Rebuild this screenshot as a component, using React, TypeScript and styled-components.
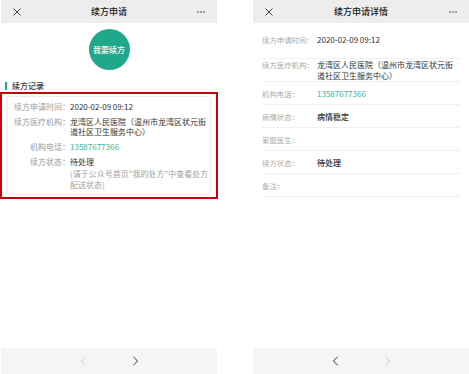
import React from 'react';
import styled, { createGlobalStyle } from 'styled-components';

const GlobalStyle = createGlobalStyle`
  html, body {
    margin: 0;
    padding: 0;
    background: #ffffff;
  }
  body {
    font-family: "Noto Sans CJK SC", "Noto Sans", sans-serif;
    -webkit-font-smoothing: antialiased;
  }
`;

// Layout
const Page = styled.div`
  width: 469px;
  height: 374px;
  padding-left: 1px;
  box-sizing: border-box;
  display: flex;
  gap: 36px;
  overflow: hidden;
`;

const Phone = styled.div`
  width: 216px;
  height: 374px;
  display: flex;
  flex-direction: column;
  background: #fff;
`;

const Header = styled.header`
  height: 23px;
  flex-shrink: 0;
  background: #ededed;
  display: grid;
  grid-template-columns: 1fr auto 1fr;
  align-items: center;
  padding: 0 12px;
`;

const HeaderTitle = styled.h1`
  margin: 0;
  font-size: 9px;
  line-height: 11px;
  font-weight: 500;
  color: #1a1a1a;
`;

const CloseIcon = styled.svg`
  width: 8px;
  height: 8px;
  justify-self: start;
`;

const MoreIcon = styled.svg`
  width: 8px;
  height: 2px;
  justify-self: end;
`;

const Body = styled.main`
  flex: 1;
  display: flex;
  flex-direction: column;
`;

const Footer = styled.footer`
  height: 26px;
  flex-shrink: 0;
  background: #f5f5f5;
  display: flex;
  align-items: center;
  justify-content: center;
  gap: 45px;
`;

const Chevron = styled.svg<{ $active?: boolean }>`
  width: 7px;
  height: 10px;
  color: ${p => (p.$active ? '#333333' : '#c9c9c9')};
`;

// Left screen
const RenewButton = styled.button`
  align-self: center;
  margin-top: 6px;
  width: 41px;
  height: 41px;
  border: none;
  border-radius: 50%;
  background: #21a78c;
  color: #fff;
  font-family: inherit;
  font-size: 8px;
  font-weight: 500;
  padding: 0;
`;

const SectionTitle = styled.div`
  margin-top: 11px;
  height: 10px;
  display: flex;
  align-items: center;
  gap: 5px;
  padding-left: 4px;
  font-size: 8px;
  line-height: 10px;
  font-weight: 500;
  color: #333;

  &::before {
    content: '';
    width: 2px;
    height: 8px;
    background: #21a78c;
  }
`;

const RecordFrame = styled.div`
  margin: 1px -1px 0 -1px;
  border: 2px solid #c4000b;
  padding: 2px 5px;
`;

const RecordCard = styled.div`
  border: 1px solid #ececec;
  border-radius: 3px;
  box-shadow: 0 0 3px rgba(0, 0, 0, 0.05);
  padding: 5px 0 4px 6px;
  display: flex;
  flex-direction: column;
  gap: 5px;
`;

const CardRow = styled.div`
  display: grid;
  grid-template-columns: 56px 140px;
  font-size: 8px;
  line-height: 10px;
`;

const CardLabel = styled.span`
  text-align: right;
  color: #9b9b9b;
  white-space: nowrap;
`;

const CardValue = styled.span<{ $accent?: boolean }>`
  color: ${p => (p.$accent ? '#3cb49b' : '#333333')};
`;

const Note = styled.div`
  margin-top: 1px;
  line-height: 11px;
  color: #a3a3a3;
`;

// Right screen
const DetailList = styled.div`
  display: flex;
  flex-direction: column;
  margin: 0 9px;
`;

const DetailRow = styled.div<{ $first?: boolean; $multi?: boolean }>`
  min-height: ${p => (p.$first ? 36 : 23)}px;
  box-sizing: border-box;
  padding-top: ${p => (p.$first ? 11 : 0)}px;
  display: grid;
  grid-template-columns: 55px 1fr;
  align-items: ${p => (p.$first || p.$multi ? 'start' : 'center')};
  border-bottom: 1px solid #f0f0f0;
  font-size: 8px;
  line-height: 11px;
`;

const DetailLabel = styled.span`
  font-size: 7.4px;
  color: #ababab;
  white-space: nowrap;
`;

const DetailValue = styled.span<{ $accent?: boolean; $strong?: boolean }>`
  color: ${p => (p.$accent ? '#3cb49b' : '#333333')};
  font-weight: ${p => (p.$strong ? 500 : 400)};
`;

const TopBar: React.FC<{ title: string }> = ({ title }) => (
  <Header>
    <CloseIcon viewBox="0 0 8 8" fill="none" stroke="#333" strokeWidth={0.9}>
      <path d="M0.5 0.5L7.5 7.5M7.5 0.5L0.5 7.5" />
    </CloseIcon>
    <HeaderTitle>{title}</HeaderTitle>
    <MoreIcon viewBox="0 0 8 2" fill="#333">
      <circle cx="1" cy="1" r="0.8" />
      <circle cx="4" cy="1" r="0.8" />
      <circle cx="7" cy="1" r="0.8" />
    </MoreIcon>
  </Header>
);

const NavBar: React.FC<{ back: boolean; forward: boolean }> = ({ back, forward }) => (
  <Footer>
    <Chevron $active={back} viewBox="0 0 7 10" fill="none" stroke="currentColor" strokeWidth={1}>
      <path d="M5.5 0.8L1.5 5L5.5 9.2" />
    </Chevron>
    <Chevron $active={forward} viewBox="0 0 7 10" fill="none" stroke="currentColor" strokeWidth={1}>
      <path d="M1.5 0.8L5.5 5L1.5 9.2" />
    </Chevron>
  </Footer>
);

const details = [
  { label: '续方申请时间：', value: '2020-02-09 09:12' },
  { label: '续方医疗机构：', value: ['龙湾区人民医院（温州市龙湾区状元街', '道社区卫生服务中心）'] },
  { label: '机构电话：', value: '13587677366', accent: true },
  { label: '病情状态：', value: '病情稳定', strong: true },
  { label: '家庭医生：', value: '' },
  { label: '续方状态：', value: '待处理', strong: true },
  { label: '备注：', value: '' },
];

const App: React.FC = () => (
  <>
    <GlobalStyle />
    <Page>
      <Phone>
        <TopBar title="续方申请" />
        <Body>
          <RenewButton>我要续方</RenewButton>
          <SectionTitle>续方记录</SectionTitle>
          <RecordFrame>
            <RecordCard>
              <CardRow>
                <CardLabel>续方申请时间：</CardLabel>
                <CardValue>2020-02-09 09:12</CardValue>
              </CardRow>
              <CardRow>
                <CardLabel>续方医疗机构：</CardLabel>
                <CardValue>
                  龙湾区人民医院（温州市龙湾区状元街
                  <br />
                  道社区卫生服务中心）
                </CardValue>
              </CardRow>
              <CardRow>
                <CardLabel>机构电话：</CardLabel>
                <CardValue $accent>13587677366</CardValue>
              </CardRow>
              <CardRow>
                <CardLabel>续方状态：</CardLabel>
                <CardValue>
                  待处理
                  <Note>
                    (请于公众号首页"我的处方"中查看处方
                    <br />
                    配送状态)
                  </Note>
                </CardValue>
              </CardRow>
            </RecordCard>
          </RecordFrame>
        </Body>
        <NavBar back={false} forward />
      </Phone>

      <Phone>
        <TopBar title="续方申请详情" />
        <Body>
          <DetailList>
            {details.map((d, i) => (
              <DetailRow key={d.label} $first={i === 0} $multi={Array.isArray(d.value)}>
                <DetailLabel>{d.label}</DetailLabel>
                <DetailValue $accent={d.accent} $strong={d.strong}>
                  {Array.isArray(d.value)
                    ? d.value.map((line, j) => (
                        <React.Fragment key={j}>
                          {j > 0 && <br />}
                          {line}
                        </React.Fragment>
                      ))
                    : d.value}
                </DetailValue>
              </DetailRow>
            ))}
          </DetailList>
        </Body>
        <NavBar back forward={false} />
      </Phone>
    </Page>
  </>
);

export default App;
